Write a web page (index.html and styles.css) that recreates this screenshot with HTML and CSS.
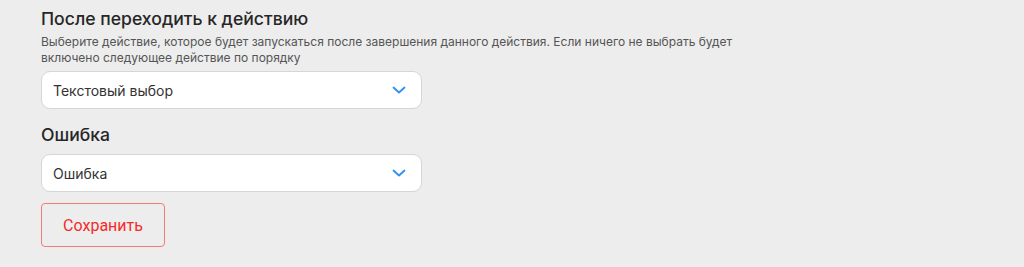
FILE: index.html
```html
<!DOCTYPE html>
<html lang="ru">
<head>
<meta charset="utf-8">
<link rel="stylesheet" href="styles.css">
</head>
<body>
<div class="page">
  <div class="field">
    <h2 class="title">После переходить к действию</h2>
    <p class="hint">Выберите действие, которое будет запускаться после завершения данного действия. Если ничего не выбрать будет включено следующее действие по порядку</p>
    <div class="select">
      <span class="value">Текстовый выбор</span>
      <svg class="chev" width="14" height="8" viewBox="0 0 14 8"><path d="M1.5 1.5 L7 6.5 L12.5 1.5" fill="none" stroke="#2f8ef4" stroke-width="1.8" stroke-linecap="round" stroke-linejoin="round"/></svg>
    </div>
  </div>
  <div class="field second">
    <h2 class="title">Ошибка</h2>
    <div class="select">
      <span class="value">Ошибка</span>
      <svg class="chev" width="14" height="8" viewBox="0 0 14 8"><path d="M1.5 1.5 L7 6.5 L12.5 1.5" fill="none" stroke="#2f8ef4" stroke-width="1.8" stroke-linecap="round" stroke-linejoin="round"/></svg>
    </div>
  </div>
  <button class="save">Сохранить</button>
</div>
</body>
</html>
```
FILE: styles.css
```css
html, body {
  margin: 0;
  padding: 0;
  background: #ededed;
}
body {
  font-family: Inter, "Noto Sans", sans-serif;
  color: #2b2b2b;
}
.page {
  height: 267px;
  box-sizing: border-box;
  padding: 8px 0 0 41px;
  display: flex;
  flex-direction: column;
  align-items: flex-start;
}
.field {
  display: flex;
  flex-direction: column;
}
.title {
  margin: 0;
  font-size: 17.6px;
  line-height: 22px;
  font-weight: 500;
  color: #262626;
}
.hint {
  margin: 4px 0 0;
  width: 730px;
  font-size: 12px;
  line-height: 16px;
  color: #555;
}
.select {
  margin-top: 5px;
  width: 381px;
  height: 38px;
  box-sizing: border-box;
  background: #fff;
  border: 1px solid #d6d6d6;
  border-radius: 9px;
  display: flex;
  align-items: center;
  justify-content: space-between;
  padding: 0 15px 0 11px;
}
.value {
  font-size: 14px;
  color: #333;
}
.second {
  margin-top: 15px;
}
.second .select {
  margin-top: 8px;
}
.save {
  margin-top: 11px;
  width: 124px;
  height: 44px;
  background: transparent;
  border: 1.5px solid #f47a7a;
  border-radius: 4px;
  color: #f52a2a;
  font-family: Roboto, "Liberation Sans", sans-serif;
  font-size: 16px;
  cursor: pointer;
}
```
